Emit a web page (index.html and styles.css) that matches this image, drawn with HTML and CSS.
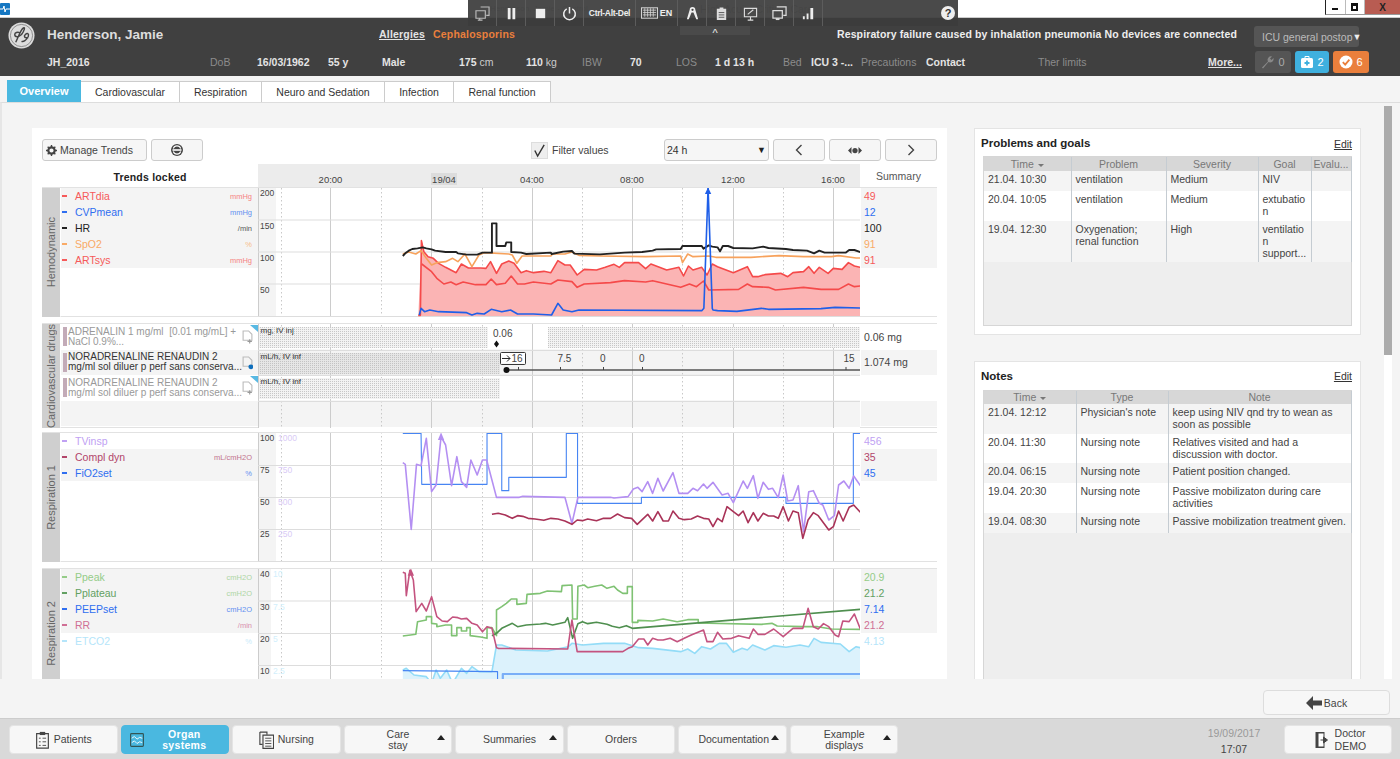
FILE: index.html
```html
<!DOCTYPE html>
<html lang="en">
<head>
<meta charset="utf-8">
<title>Henderson, Jamie</title>
<link rel="stylesheet" href="styles.css">
</head>
<body>
<div class="app">
  <div class="titlebar">
    <svg class="appicon" viewBox="0 0 10 12"><rect width="10" height="12" rx="1" fill="#1577c2"/><path d="M0 6h3l1-3 1 6 1-3h4" fill="none" stroke="#fff" stroke-width="1"/></svg>
    <span class="wintitle wt1">Henderson, Jamie - Control</span>
    <span class="wintitle wt2">High Acuity Critical Care</span>
    <div class="winctl">
      <span class="wc"><i class="wc-min"></i></span>
      <span class="wc"><i class="wc-res"></i></span>
      <span class="wc wc-close">X</span>
    </div>
  </div>

  <div class="remote">
    <span class="rt"><svg viewBox="0 0 16 16"><path d="M6 1h9v9h-3M1 5h10v8H1zM5 13v2M3 15h5" fill="none" stroke="#bbb" stroke-width="1.2"/></svg></span>
    <span class="rt"><svg viewBox="0 0 16 16"><path d="M4 2h3v12H4zM9 2h3v12H9z" fill="#eee"/></svg></span>
    <span class="rt"><svg viewBox="0 0 16 16"><rect x="3" y="3" width="10" height="10" fill="#eee"/></svg></span>
    <span class="rt"><svg viewBox="0 0 16 16"><path d="M5 3a6.2 6.2 0 1 0 6 0M8 1v7" fill="none" stroke="#eee" stroke-width="1.6"/></svg></span>
    <span class="rt rt-cad">Ctrl-Alt-Del</span>
    <span class="rt rt-kb"><svg viewBox="0 0 18 12"><rect x=".5" y=".5" width="17" height="11" fill="none" stroke="#ddd"/><path d="M2 3h14M2 5.500h14M2 8h14M4 1v9M7 1v9M10 1v9M13 1v9" stroke="#ddd" stroke-width=".8" fill="none"/></svg><b>EN</b></span>
    <span class="rt"><svg viewBox="0 0 16 16"><path d="M8 1a3 3 0 0 1 3 3l3 10h-2l-3-7H7l-3 7H2L5 4a3 3 0 0 1 3-3z" fill="#eee"/><circle cx="8" cy="4" r="1.200" fill="#444"/></svg></span>
    <span class="rt"><svg viewBox="0 0 16 16"><path d="M3 3h10v12H3zM6 1.500h4v3H6z" fill="#ddd"/><path d="M5 7h6M5 9.500h6M5 12h6" stroke="#555"/></svg></span>
    <span class="rt"><svg viewBox="0 0 16 16"><path d="M1.500 2.500h13v9h-13zM5 15h6M8 11.500V15M5 9l6-5" fill="none" stroke="#ddd" stroke-width="1.200"/></svg></span>
    <span class="rt"><svg viewBox="0 0 16 16"><path d="M5 1h10v9h-3" fill="none" stroke="#ddd" stroke-width="1.300"/><path d="M1 5h10v8H1z" fill="none" stroke="#ddd" stroke-width="1.300"/><path d="M4 13v2h4v-2" fill="#ddd"/></svg></span>
    <span class="rt"><svg viewBox="0 0 16 16"><path d="M2 11h2v3H2zM6 8h2v6H6zM10 2h3v12h-3z" fill="#eee"/></svg></span>
    <span class="rt rt-wide"></span>
    <span class="rt rt-help">?</span>
  </div>
  <div class="remote-tab">^</div>

  <header class="hdr">
    <div class="hdr-row1">
      <span class="pname up-t">Henderson, Jamie</span>
      <a class="hlink up-t">Allergies</a>
      <span class="allergy up-t">Cephalosporins</span>
      <span class="diag up-t">Respiratory failure caused by inhalation pneumonia No devices are connected</span>
      <span class="unitsel">ICU general postop<i>▼</i></span>
    </div>
    <div class="hdr-row2">
      <b>JH_2016</b><span>DoB</span><b>16/03/1962</b><b>55 y</b><b>Male</b>
      <b>175 <span>cm</span></b><b>110 <span>kg</span></b><span>IBW</span><b>70</b><span>LOS</span>
      <b>1 d 13 h</b><span>Bed</span><b>ICU 3 -...</b><span>Precautions</span><b>Contact</b>
      <span>Ther limits</span><a class="hlink">More...</a>
      <div class="badges">
        <div class="badge b-gray"><svg viewBox="0 0 14 14"><path d="M1 12.500 7 6.500a3.500 3.500 0 0 1 4-5L9 3.500l1.500 1.500 2-2a3.500 3.500 0 0 1-5 4l-5.500 6.500z" fill="#888"/></svg>0</div>
        <div class="badge b-blue"><svg viewBox="0 0 14 14"><rect x="1" y="3" width="12" height="10" rx="1.500" fill="#fff"/><path d="M5 3V1.500h4V3" fill="none" stroke="#fff"/><path d="M7 5.500v5M4.500 8h5" stroke="#3fb0de" stroke-width="1.800"/></svg>2</div>
        <div class="badge b-orange"><svg viewBox="0 0 14 14"><circle cx="7" cy="7" r="6.500" fill="#fff"/><path d="M3.800 7.200 6.200 9.600 10.400 4.600" fill="none" stroke="#ea7f3c" stroke-width="1.800"/></svg>6</div>
      </div>
    </div>
    <svg class="gelogo" viewBox="0 0 28 28"><circle cx="14" cy="14" r="13.500" fill="#ddd"/><circle cx="14" cy="14" r="11.500" fill="none" stroke="#555" stroke-width=".6"/><path d="M8 21c3-6 5-13 8-15 2-1 1 3-2 7-3 3-7 3-7 0 0-2 3-3 5-2M14 20c2 1 5-1 7-5 1-3-1-4-3-2-2 2-1 4 3 3" fill="none" stroke="#444" stroke-width="1.500"/></svg>
  </header>

  <nav class="tabs">
    <a class="tab tab-on t1">Overview</a>
    <a class="tab t2">Cardiovascular</a>
    <a class="tab t3">Respiration</a>
    <a class="tab t4">Neuro and Sedation</a>
    <a class="tab t5">Infection</a>
    <a class="tab t6">Renal function</a>
  </nav>

  <main class="content">
    <section class="chartcard">
      <div class="tools">
        <button class="btn btn-mt"><svg viewBox="0 0 12 12"><circle cx="6" cy="6" r="3.500" fill="none" stroke="#444" stroke-width="2.400"/><path d="M6 0v2.500M6 9.500V12M0 6h2.500M9.500 6H12M1.800 1.800l1.800 1.800M8.400 8.400l1.800 1.800M1.800 10.200l1.800-1.800M8.400 3.600l1.800-1.800" stroke="#444" stroke-width="1.500"/></svg>Manage Trends</button>
        <button class="btn btn-ref"><svg viewBox="0 0 12 12"><circle cx="6" cy="6" r="6" fill="#444"/><path d="M2.300 4.500a3.900 3.900 0 0 1 7.400 0M9.700 7.500a3.900 3.900 0 0 1-7.400 0" fill="none" stroke="#fff" stroke-width="1.100"/><path d="M1.500 5.500h9M1.500 6.500h9" stroke="#fff" stroke-width=".8"/></svg></button>
        <span class="check"><svg viewBox="0 0 16 16"><path d="M3 8l3 6 7-12" fill="none" stroke="#333" stroke-width="1.500"/></svg></span>
        <span class="filter">Filter values</span>
        <span class="sel">24 h<i>▼</i></span>
        <button class="btn btn-nav"><svg viewBox="0 0 8 12"><path d="M6.500 1 1.500 6l5 5" fill="none" stroke="#444" stroke-width="1.400"/></svg></button>
        <button class="btn btn-nav"><svg class="wide" viewBox="0 0 18 8"><path d="M5 0v8L1 4zM13 0v8l4-4z" fill="#444"/><circle cx="9" cy="4" r="3" fill="#444"/></svg></button>
        <button class="btn btn-nav"><svg viewBox="0 0 8 12"><path d="M1.500 1l5 5-5 5" fill="none" stroke="#444" stroke-width="1.400"/></svg></button>
      </div>

      <div class="row axisrow">
        <div class="locked">Trends locked</div>
        <svg class="axis" viewBox="258 164 602 23">
          <rect class="dateb" x="431" y="173" width="26" height="12"/>
          <text x="330.500" y="183">20:00</text><text x="444" y="183">19/04</text><text x="532" y="183">04:00</text><text x="632" y="183">08:00</text><text x="733" y="183">12:00</text><text x="833" y="183">16:00</text>
        </svg>
        <div class="sumhead">Summary</div>
      </div>

      <!-- Hemodynamic -->
      <div class="row sec">
        <div class="vlabel"><span>Hemodynamic</span></div>
        <div class="legend">
          <div class="lg on c-red"><i></i><span>ARTdia</span><em>mmHg</em></div>
          <div class="lg on c-blue"><i></i><span>CVPmean</span><em>mmHg</em></div>
          <div class="lg on c-blk"><i></i><span>HR</span><em>/min</em></div>
          <div class="lg on c-org"><i></i><span>SpO2</span><em>%</em></div>
          <div class="lg on c-red"><i></i><span>ARTsys</span><em>mmHg</em></div>
        </div>
        <svg class="plot" viewBox="258 188 602 129">
          <defs>
            <g id="vgrid">
              <path class="gmaj" d="M258.500 100V900M330.500 100V900M431.500 100V900M532.500 100V900M632.500 100V900M733.500 100V900M833.500 100V900"/>
              <path class="gmin" d="M281.500 100V900M381.500 100V900M482.500 100V900M582.500 100V900M682.500 100V900M783.500 100V900"/>
            </g>
          </defs>
          <rect class="ybg" x="258" y="187" width="18" height="130"/>
          <use href="#vgrid"/>
          <path class="ghz" d="M258 220H860M258 252H860M258 284H860M258 316.500H860"/>
          <text class="yt" x="260" y="196">200</text><text class="yt" x="260" y="228.500">150</text><text class="yt" x="260" y="260.500">100</text><text class="yt" x="260" y="292.500">50</text>
          <g transform="translate(400 130) scale(.35088 .33333)">
            <polygon class="f-red" points="62,332 68,365 80,380 95,385 110,400 130,412 160,428 175,402 195,414 230,414 245,415 258,395 275,430 290,402 310,393 325,400 345,428 360,422 380,428 410,424 430,428 450,392 470,405 485,405 505,435 525,418 560,420 585,412 610,403 625,412 640,398 680,398 700,416 715,402 760,420 795,412 808,438 822,408 835,420 860,412 875,435 890,402 905,410 950,428 990,410 1005,440 1020,440 1040,434 1085,430 1105,440 1120,428 1150,425 1165,410 1180,430 1195,412 1220,430 1235,415 1260,418 1278,398 1295,408 1312,412 1312,558 52,558"/>
            <polyline class="ln s-red" points="52,556 58,556 61,332 68,365 80,380 95,385 110,400 130,412 160,428 175,402 195,414 230,414 245,415 258,395 275,430 290,402 310,393 325,400 345,428 360,422 380,428 410,424 430,428 450,392 470,405 485,405 505,435 525,418 560,420 585,412 610,403 625,412 640,398 680,398 700,416 715,402 760,420 795,412 808,438 822,408 835,420 860,412 875,435 890,402 905,410 950,428 990,410 1005,440 1020,440 1040,434 1085,430 1105,440 1120,428 1150,425 1165,410 1180,430 1195,412 1220,430 1235,415 1260,418 1278,398 1295,408 1312,412"/>
            <polyline class="ln s-red" points="62,402 90,425 105,445 125,462 145,456 160,464 180,456 215,464 245,464 260,447 275,464 300,460 317,438 335,462 355,462 380,456 430,462 450,450 490,455 505,472 525,462 600,458 640,452 700,456 720,452 800,472 825,462 845,470 865,453 880,480 965,478 990,462 1005,470 1050,472 1070,480 1150,472 1200,478 1250,478 1278,462 1295,470 1312,468"/>
            <polyline class="ln s-org" points="8,372 25,366 45,372 60,362 75,385 90,405 105,398 130,395 150,385 165,395 185,372 205,410 225,375 240,368 310,372 320,375 333,400 348,378 430,378 435,372 470,372 490,366 510,376 570,378 700,380 800,378 805,398 820,372 835,380 880,378 900,382 1000,382 1080,377 1150,380 1230,380 1250,377 1300,384 1312,384"/>
            <polyline class="ln s-blk" points="8,378 15,370 25,362 35,357 50,355 65,352 75,355 90,358 100,362 130,366 160,366 165,370 190,374 220,374 235,368 262,368 262,280 275,280 275,348 300,348 303,337 317,337 317,366 345,368 360,372 430,368 432,372 465,365 490,363 497,371 570,373 640,368 690,366 720,362 730,358 800,357 805,348 860,348 865,356 880,346 890,350 905,352 912,364 920,348 935,348 950,354 1005,355 1035,350 1050,354 1100,357 1120,360 1160,362 1180,370 1195,362 1210,368 1270,368 1280,360 1295,360 1312,366"/>
            <polyline class="ln s-blue" points="55,555 60,535 70,545 85,540 110,545 190,548 205,555 220,550 240,552 260,538 290,545 315,540 335,552 380,552 432,555 450,520 465,540 490,545 510,540 860,542 866,535 878,175 890,535 892,540 905,542 960,544 1030,535 1050,538 1200,536 1240,532 1312,534"/>
            <polygon class="a-blue" points="869,192 878,172 887,192"/>
          </g>
        </svg>
        <div class="summary">
          <div class="sv on c-red">49</div><div class="sv on c-blue">12</div><div class="sv on c-blk">100</div><div class="sv on c-org">91</div><div class="sv on c-red">91</div>
        </div>
      </div>

      <!-- Cardiovascular drugs -->
      <div class="row sec sec-d">
        <div class="vlabel"><span>Cardiovascular drugs</span></div>
        <div class="legend">
          <div class="drug faded"><i class="pill"></i><p>ADRENALIN 1 mg/ml&nbsp; [0.01 mg/mL] +<br>NaCl 0.9%...</p>
            <svg class="doc" viewBox="0 0 10 12"><path d="M1 .5h5l3 3V9H1z" fill="none" stroke="#bbb"/><path d="M5 10h4M7 8v4" stroke="#999"/></svg><b class="corner"></b></div>
          <div class="drug on"><i class="pill"></i><p>NORADRENALINE RENAUDIN 2<br>mg/ml sol diluer p perf sans conserva...</p>
            <svg class="doc" viewBox="0 0 10 12"><path d="M1 .5h5l3 3V9H1z" fill="none" stroke="#bbb"/><circle cx="8" cy="9.500" r="2.200" fill="#0f6fbd"/></svg></div>
          <div class="drug faded"><i class="pill"></i><p>NORADRENALINE RENAUDIN 2<br>mg/ml sol diluer p perf sans conserva...</p>
            <svg class="doc" viewBox="0 0 10 12"><path d="M1 .5h5l3 3V9H1z" fill="none" stroke="#bbb"/><path d="M5 10h4M7 8v4" stroke="#999"/></svg><b class="corner"></b></div>
          <div class="drug on"></div>
        </div>
        <svg class="plot" viewBox="258 324 602 102">
          <defs>
            <pattern id="hatch" width="2" height="2" patternUnits="userSpaceOnUse"><rect width="2" height="2" fill="#f3f3f3"/><rect width="1" height="1" fill="#c6c6c6"/></pattern>
            <pattern id="hatch2" width="2" height="2" patternUnits="userSpaceOnUse"><rect width="2" height="2" fill="#e6e6e6"/><rect width="1" height="1" fill="#c2c2c2"/></pattern>
          </defs>
          <rect class="rowbg" x="258" y="350" width="602" height="25"/><rect class="rowbg" x="258" y="401" width="602" height="25"/>
          <use href="#vgrid"/>
          <rect fill="url(#hatch)" x="259" y="326" width="229" height="21"/><rect fill="url(#hatch)" x="548" y="326" width="312" height="21"/>
          <rect fill="url(#hatch2)" x="259" y="352" width="241" height="21"/>
          <rect fill="url(#hatch)" x="259" y="377" width="241" height="21"/>
          <path class="ghz" d="M258 349.500H860M258 374.500H860M258 400.500H860"/>
          <text class="dt" x="260.500" y="332.500">mg, IV inj</text><text class="dt" x="260.500" y="358">mL/h, IV inf</text><text class="dt" x="260.500" y="383.500">mL/h, IV inf</text>
          <text class="dv" x="493" y="336">0.06</text>
          <path class="dia" d="M496.500 339.500l2.500 3.500-2.500 3.500-2.500-3.500z"/>
          <rect class="boxv" x="500.500" y="351.500" width="25" height="12" rx="1"/>
          <path class="arr" d="M502 357.500h8M507 354.500l3 3-3 3"/>
          <text class="dv" x="511.500" y="361.500">16</text>
          <text class="dv" x="557.500" y="361.500">7.5</text><text class="dv" x="600" y="361.500">0</text><text class="dv" x="639" y="361.500">0</text><text class="dv" x="843.500" y="361.500">15</text>
          <path class="tl" d="M506 369H860"/><path class="tk" d="M518.500 366v3M560.500 366v3M603.500 366v3M642.500 366v3M846 366v3"/>
          <circle class="dia" cx="506.500" cy="369" r="3"/>
        </svg>
        <div class="summary">
          <div class="sd"><span>0.06 mg</span></div><div class="sd sd-on"><span>1.074 mg</span></div><div class="sd"></div><div class="sd sd-on"></div>
        </div>
      </div>

      <!-- Respiration 1 -->
      <div class="row sec">
        <div class="vlabel"><span>Respiration 1</span></div>
        <div class="legend">
          <div class="lg c-pur"><i></i><span>TVinsp</span><em></em></div>
          <div class="lg on c-mar"><i></i><span>Compl dyn</span><em>mL/cmH2O</em></div>
          <div class="lg on c-blue"><i></i><span>FiO2set</span><em>%</em></div>
        </div>
        <svg class="plot" viewBox="258 433 602 129">
          <rect class="ybg" x="258" y="432" width="18" height="130"/>
          <use href="#vgrid"/>
          <path class="ghz" d="M258 465.500H860M258 497.500H860M258 529.500H860M258 561.500H860"/>
          <text class="yt" x="260" y="441">100</text><text class="yt" x="260" y="473">75</text><text class="yt" x="260" y="505">50</text><text class="yt" x="260" y="537">25</text>
          <text class="yl-p" x="278" y="441">1000</text><text class="yl-p" x="278" y="473">750</text><text class="yl-p" x="278" y="505">500</text><text class="yl-p" x="278" y="537">250</text>
          <g transform="translate(400 425) scale(.35088 .33333)">
            <polyline class="ln1 s-blue2" points="8,25 60,25 62,178 248,178 248,25 290,25 290,197 310,197 310,157 474,157 474,25 506,25 506,235 688,235 688,217 1100,217 1100,235 1292,235 1292,25 1312,25"/>
            <polyline class="ln s-pur" points="8,113 15,118 32,313 47,118 60,122 75,40 90,200 103,180 117,35 130,60 147,182 162,95 175,170 190,187 202,105 220,150 235,105 247,105 275,217 340,217 350,214 470,217 490,295 507,217 600,217 610,219 650,215 665,192 678,187 690,200 706,170 720,205 735,160 750,198 778,143 795,205 820,205 835,190 848,197 865,177 875,190 892,172 918,210 935,205 950,233 978,168 990,190 1007,152 1020,220 1035,172 1050,193 1062,190 1078,218 1092,150 1105,228 1120,225 1135,182 1150,320 1165,200 1178,197 1195,235 1205,240 1222,285 1238,272 1250,180 1265,168 1280,190 1293,153 1312,182"/>
            <polygon class="a-pur" points="108,45 117,22 126,45"/>
            <polyline class="ln s-mar" points="262,268 280,265 300,270 320,280 335,272 350,274 365,280 385,282 410,286 430,280 450,282 470,288 490,298 505,285 520,287 535,282 560,287 580,280 600,280 620,267 640,278 660,280 676,298 706,268 720,288 735,260 750,288 765,288 778,258 795,280 810,284 830,282 848,273 865,280 880,282 892,305 905,280 918,290 932,245 950,260 965,272 978,258 992,293 1007,263 1020,288 1035,265 1050,273 1065,273 1078,280 1092,245 1107,288 1120,258 1135,263 1148,340 1163,285 1178,263 1192,272 1222,315 1235,305 1250,258 1263,288 1280,247 1293,240 1312,262"/>
          </g>
        </svg>
        <div class="summary">
          <div class="sv c-pur">456</div><div class="sv on c-mar">35</div><div class="sv on c-blue">45</div>
        </div>
      </div>

      <!-- Respiration 2 -->
      <div class="row sec">
        <div class="vlabel"><span>Respiration 2</span></div>
        <div class="legend">
          <div class="lg on c-lg"><i></i><span>Ppeak</span><em>cmH2O</em></div>
          <div class="lg on c-dg"><i></i><span>Pplateau</span><em class="u-lg">cmH2O</em></div>
          <div class="lg on c-blue"><i></i><span>PEEPset</span><em>cmH2O</em></div>
          <div class="lg on c-pink"><i></i><span>RR</span><em>/min</em></div>
          <div class="lg c-sky"><i></i><span>ETCO2</span><em>%</em></div>
        </div>
        <svg class="plot" viewBox="258 569 602 129">
          <rect class="ybg" x="258" y="568" width="13" height="130"/>
          <use href="#vgrid"/>
          <path class="ghz" d="M258 601H860M258 633.500H860M258 665.500H860"/>
          <text class="yt" x="260" y="577">40</text><text class="yt" x="260" y="609.500">30</text><text class="yt" x="260" y="642">20</text><text class="yt" x="260" y="673.500">10</text>
          <text class="yl-s" x="273" y="577">10</text><text class="yl-s" x="273" y="609.500">7.5</text><text class="yl-s" x="273" y="642">5</text><text class="yl-s" x="273" y="673.500">2.5</text>
          <g transform="translate(400 425) scale(.35088 .33333)">
            <polygon class="f-sky" points="8,735 18,730 40,750 75,755 90,775 103,735 115,760 133,735 150,775 175,730 190,745 205,725 225,740 262,740 275,660 290,660 330,675 420,678 480,665 490,655 520,660 580,655 640,655 680,668 720,670 800,680 820,672 840,685 860,665 885,672 910,655 930,655 950,682 975,670 990,675 1005,660 1040,675 1065,662 1100,667 1140,660 1165,665 1180,640 1200,652 1255,657 1280,680 1300,665 1312,668 1312,800 8,800"/>
            <polyline class="ln s-sky" points="8,735 18,730 40,750 75,755 90,775 103,735 115,760 133,735 150,775 175,730 190,745 205,725 225,740 262,740 275,660 290,660 330,675 420,678 480,665 490,655 520,660 580,655 640,655 680,668 720,670 800,680 820,672 840,685 860,665 885,672 910,655 930,655 950,682 975,670 990,675 1005,660 1040,675 1065,662 1100,667 1140,660 1165,665 1180,640 1200,652 1255,657 1280,680 1300,665 1312,668"/>
            <polyline class="ln1 s-blue2" points="8,737 278,740 278,770"/>
            <polyline class="ln s-peep" points="293,770 293,747 1312,747"/>
            <polyline class="ln s-lg" points="8,633 30,630 45,628 50,590 75,585 75,575 90,575 90,595 105,597 105,605 130,600 147,600 147,632 162,632 162,608 175,608 175,618 190,618 190,608 200,608 200,632 230,636 248,640 248,608 262,608 275,632 275,555 290,545 303,535 317,522 333,522 333,538 360,535 362,508 400,505 420,498 460,500 462,482 490,480 492,582 505,582 507,484 525,480 535,488 555,484 575,480 590,490 610,484 620,495 635,505 648,505 648,485 662,485 662,592 678,592 678,586 720,588 750,582 790,590 820,584 850,584 850,594 1030,598 1060,595 1075,603 1150,605 1190,605 1230,612 1312,613"/>
            <polyline class="ln s-dg" points="262,632 275,625 290,610 320,595 335,605 360,600 400,597 415,595 435,600 470,592 478,578 492,640 507,596 520,590 535,596 560,592 590,598 605,604 625,608 645,602 662,610 1312,553"/>
            <polyline class="ln s-pink" points="8,442 15,445 18,512 28,436 38,465 46,560 62,535 75,558 90,515 105,575 120,588 135,590 150,576 165,578 175,582 190,580 205,595 220,600 235,620 248,605 262,610 275,668 280,670 478,672 490,585 505,680 635,680 650,670 662,665 680,642 695,642 706,660 720,640 735,645 750,645 770,640 790,650 810,640 830,630 865,615 875,650 892,650 905,622 920,642 945,640 965,632 995,640 1007,612 1020,628 1040,628 1065,612 1092,635 1120,610 1148,610 1163,550 1178,605 1192,612 1207,596 1222,605 1240,630 1250,635 1262,588 1280,590 1295,567 1312,612"/>
            <polygon class="a-pink" points="22,452 31,430 40,452"/>
          </g>
        </svg>
        <div class="summary">
          <div class="sv on c-lg">20.9</div><div class="sv on c-dg">21.2</div><div class="sv on c-blue">7.14</div><div class="sv on c-pink">21.2</div><div class="sv c-sky">4.13</div>
        </div>
      </div>
    </section>

    <aside class="side">
      <section class="panel p1">
        <div class="phead"><h2>Problems and goals</h2><a>Edit</a></div>
        <div class="twrap tw1">
          <table>
            <colgroup><col class="c87"><col class="c95"><col class="c92"><col class="c53"><col class="c40"></colgroup>
            <thead><tr><th>Time <i class="sort"></i></th><th>Problem</th><th>Severity</th><th>Goal</th><th class="left">Evalu...</th></tr></thead>
            <tbody>
              <tr><td>21.04. 10:30</td><td>ventilation</td><td>Medium</td><td>NIV</td><td></td></tr>
              <tr class="w"><td>20.04. 10:05</td><td>ventilation</td><td>Medium</td><td>extubatio<br>n</td><td></td></tr>
              <tr><td>19.04. 12:30</td><td>Oxygenation;<br>renal function</td><td>High</td><td>ventilatio<br>n<br>support...</td><td></td></tr>
            </tbody>
          </table>
        </div>
      </section>
      <section class="panel p2">
        <div class="phead"><h2>Notes</h2><a>Edit</a></div>
        <div class="twrap tw2">
          <table>
            <colgroup><col class="c92"><col class="c92"><col class="c183"></colgroup>
            <thead><tr><th>Time <i class="sort"></i></th><th>Type</th><th>Note</th></tr></thead>
            <tbody>
              <tr><td>21.04. 12:12</td><td>Physician's note</td><td>keep using NIV qnd try to wean as<br>soon as possible</td></tr>
              <tr class="w"><td>20.04. 11:30</td><td>Nursing note</td><td>Relatives visited and had a<br>discussion with doctor.</td></tr>
              <tr><td>20.04. 06:15</td><td>Nursing note</td><td>Patient position changed.</td></tr>
              <tr class="w"><td>19.04. 20:30</td><td>Nursing note</td><td>Passive mobilizaton during care<br>activities</td></tr>
              <tr><td>19.04. 08:30</td><td>Nursing note</td><td>Passive mobilization treatment given.</td></tr>
            </tbody>
          </table>
        </div>
      </section>
    </aside>

    <div class="scroll"><div class="thumb"></div></div>
  </main>

  <div class="backrow">
    <button class="backbtn"><svg viewBox="0 0 16 14"><path d="M7 0 0 7l7 7V9.500h9v-5H7z" fill="#444"/></svg>Back</button>
  </div>

  <footer class="foot">
    <button class="fb"><svg class="fi" viewBox="0 0 16 20"><path d="M1.500 3h13v16h-13z" fill="none" stroke="#444" stroke-width="1.300"/><path d="M5 1h6v3.500H5z" fill="#444"/><path d="M4 8h2M8 8h4M4 12h2M8 12h4M4 16h2M8 16h4" stroke="#444"/></svg>Patients</button>
    <button class="fb fb-on"><svg class="fi fi-a" viewBox="0 0 16 16"><rect x=".7" y=".7" width="14.600" height="14.600" rx="1" fill="none" stroke="#355" stroke-width="1.300"/><path d="M2 6l3-2 3 3 3-2 3 1M2 11l3-2 3 3 3-2 3 1" fill="none" stroke="#fff"/></svg><span class="two">Organ<br>systems</span></button>
    <button class="fb"><svg class="fi" viewBox="0 0 17 20"><path d="M1 1h8v3M1 1v14h3" fill="none" stroke="#444" stroke-width="1.300"/><path d="M4.500 4.500h12v15h-12z" fill="none" stroke="#444" stroke-width="1.300"/><path d="M7 8h7M7 11h7M7 14h7M7 17h7" stroke="#444"/></svg>Nursing</button>
    <button class="fb"><span class="twol">Care<br>stay</span><i class="up"></i></button>
    <button class="fb"><span>Summaries</span><i class="up"></i></button>
    <button class="fb">Orders</button>
    <button class="fb fb-doc"><span>Documentation</span><i class="up"></i></button>
    <button class="fb"><span class="twol">Example<br>displays</span><i class="up"></i></button>
    <div class="clock"><span>19/09/2017</span><b>17:07</b></div>
    <button class="fb fb-user"><svg class="fi" viewBox="0 0 14 18"><path d="M1 1h9v16H1z" fill="#444"/><path d="M4 2.500h5v13H4z" fill="#fff"/><path d="M6 9h4M9 6l4 3-4 3z" fill="#444" stroke="#444"/></svg><span class="twol">Doctor<br>DEMO</span></button>
  </footer>
</div>
</body>
</html>
```

FILE: styles.css
```css
* { box-sizing: border-box; }
html, body { margin: 0; height: 100%; overflow: hidden; }
body { font-family: "Liberation Sans", Arial, sans-serif; font-size: 10.5px; color: #444; background: #f4f4f4; }
button { font: inherit; color: inherit; }
.app { position: relative; width: 1400px; height: 759px; display: flex; flex-direction: column; overflow: hidden; }

/* window title bar */
.titlebar { height: 18px; background: #fff; border-bottom: 1px solid #ccc; display: flex; flex: none; align-items: flex-start; }
.appicon { width: 10px; height: 12px; margin-top: 3px; }
.wintitle { margin-top: 4px; font-size: 8px; color: #bbb; white-space: nowrap; }
.wt1 { margin-left: 480px; width: 100px; }
.wt2 { margin-left: 110px; font-size: 10.500px; margin-top: 3px; }
.winctl { margin-left: auto; display: flex; height: 15px; border-left: 1px solid #222; border-bottom: 1px solid #999; }
.wc { width: 19.500px; height: 14px; display: flex; align-items: center; justify-content: center; background: #fff; border-right: 1px solid #bbb; }
.wc-min { width: 6px; height: 2px; background: #111; margin-top: 3px; }
.wc-res { width: 7px; height: 8px; border: 2px solid #111; border-top-width: 3px; }
.wc-close { width: 35px; background: #b85c52; color: #222; font-weight: bold; font-size: 10px; border: 0; }

/* remote session toolbar */
.remote { position: absolute; left: 468px; top: 0; width: 490px; height: 26px; background: rgba(60,60,60,.93); display: flex; align-items: center; z-index: 5; }
.rt { flex: none; width: 29px; height: 26px; display: flex; align-items: center; justify-content: center; border-right: 1px solid #5c5c5c; color: #eee; }
.rt svg { width: 15px; height: 15px; }
.rt-cad { width: 52px; font-size: 8.500px; font-weight: bold; letter-spacing: -.3px; white-space: nowrap; }
.rt-kb { width: 42px; gap: 2px; }
.rt-kb svg { width: 17px; height: 12px; }
.rt-kb b { font-size: 9px; }
.rt-wide { width: 118px; border-right: 0; }
.rt-help { width: 14px; height: 14px; border: 0; border-radius: 50%; background: #eee; color: #333; font-weight: bold; font-size: 11px; }
.remote-tab { position: absolute; left: 680px; top: 26px; width: 70px; height: 9px; background: #4a4a4a; color: #eee; text-align: center; font-size: 11px; line-height: 14px; z-index: 5; }

/* patient header */
.hdr { position: relative; height: 58px; flex: none; background: #404040; padding-top: 8px; color: #e4e4e4; }
.gelogo { position: absolute; left: 8px; top: 4px; width: 27px; height: 27px; }
.hdr-row1 { height: 21px; display: grid; grid-template-columns: 379px 54px 404px 417px auto; align-items: center; font-weight: bold; font-size: 10.500px; letter-spacing: .2px; }
.up-t { padding-bottom: 5px; }
.pname { padding-left: 47px; font-size: 13.500px; letter-spacing: 0; color: #ddd; }
.hlink { text-decoration: underline; color: #e4e4e4; }
.allergy { color: #ea7f3c; }
.diag { color: #eee; white-space: nowrap; letter-spacing: .12px; }
.unitsel { width: 105px; height: 21px; background: #555; border-radius: 3px; color: #bbb; font-weight: normal; letter-spacing: 0; display: flex; align-items: center; justify-content: space-between; padding: 0 1px 0 8px; font-size: 10.500px; white-space: nowrap; }
.unitsel i { font-style: normal; font-size: 9px; color: #eee; }
.hdr-row2 { height: 22px; margin-top: 4px; padding-left: 47px; display: grid; grid-template-columns: 163px 47px 71px 54px 77px 67px 56px 48px 46px 39px 68px 28px 50px 65px 112px 170px 47px auto; align-items: center; font-size: 10.500px; }
.hdr-row2 b { white-space: nowrap; }
.hdr-row2 > span, .hdr-row2 b span { color: #8c8c8c; font-weight: normal; white-space: nowrap; }
.hdr-row2 b span { color: #ccc; }
.hdr-row2 .hlink { font-weight: bold; }
.badges { display: flex; gap: 4px; }
.badge { width: 36px; height: 22px; border-radius: 3px; display: flex; align-items: center; justify-content: center; gap: 3px; font-size: 11px; color: #fff; }
.badge svg { width: 14px; height: 14px; }
.b-gray { background: #555; color: #aaa; }
.b-blue { background: #3fb0de; width: 34px; }
.b-orange { background: #ea7f3c; }

/* tabs */
.tabs { height: 26px; flex: none; display: flex; align-items: flex-end; padding-left: 7px; background: #f4f4f4; }
.tab { height: 21px; display: flex; align-items: center; justify-content: center; background: #fff; border: 1px solid #ccc; border-left: 0; border-bottom: 0; font-size: 10.500px; color: #333; }
.tab-on { height: 22px; background: #4ab8e0; color: #fff; font-weight: bold; border: 0; font-size: 11px; }
.t1 { width: 74px; } .t2 { width: 99px; } .t3 { width: 82px; } .t4 { width: 123px; } .t5 { width: 69px; } .t6 { width: 97px; }

/* main area */
.content { height: 577px; flex: none; display: flex; align-items: flex-start; overflow: hidden; border-top: 1px solid #ddd; background: #f4f4f4; border-left: 2px solid #e6e6e6; }
.chartcard { flex: none; width: 915px; margin: 25px 0 0 30px; padding: 11px 10px 0; background: #fff; }
.tools { display: flex; align-items: center; height: 22px; }
.btn { height: 22px; padding: 0; background: #f6f6f6; border: 1px solid #ccc; border-radius: 3px; display: flex; align-items: center; justify-content: center; font-size: 10.500px; color: #444; }
.btn svg { width: 8px; height: 12px; }
.btn svg.wide { width: 16px; height: 7px; }
.btn-mt { width: 105px; gap: 3px; justify-content: flex-start; padding-left: 3px; }
.btn-mt svg { width: 11px; height: 11px; }
.btn-ref { width: 52px; margin-left: 4px; }
.btn-ref svg { width: 12px; height: 12px; }
.check { width: 17px; height: 17px; margin-left: 328px; background: #eee; border: 1px solid #ddd; }
.check svg { display: block; width: 15px; height: 15px; }
.filter { margin-left: 4px; width: 112px; }
.sel { width: 105px; height: 22px; background: #f6f6f6; border: 1px solid #ccc; border-radius: 3px; display: flex; align-items: center; justify-content: space-between; padding: 0 2px 0 2px; color: #333; }
.sel i { font-style: normal; font-size: 9px; color: #222; }
.btn-nav { width: 52px; margin-left: 4px; }

.row { display: grid; grid-template-columns: 18px 198px 602px 77px; }
.axisrow { margin-top: 3px; height: 23px; }
.locked { grid-column: 1 / 3; padding-top: 7px; text-align: center; font-weight: bold; font-size: 10.500px; color: #222; letter-spacing: .2px; }
.axis { display: block; width: 602px; height: 23px; background: #ececec; }
.axis text { font-size: 9.500px; fill: #444; text-anchor: middle; }
.dateb { fill: #dcdcdc; }
.sumhead { text-align: center; padding-top: 6px; color: #555; font-size: 10.500px; }

.sec { height: 130px; margin-bottom: 6px; border-top: 1px solid #e2e2e2; }
.sec-d { height: 103px; }
.vlabel { background: #cfcfcf; display: flex; align-items: center; justify-content: center; }
.vlabel span { writing-mode: vertical-rl; transform: rotate(180deg); white-space: nowrap; font-size: 11px; color: #666; }
.legend { border-left: 1px solid #fff; border-bottom: 1px solid #e2e2e2; }
.summary { border-bottom: 1px solid #e2e2e2; padding-left: 1px; }
.lg { height: 16px; display: flex; align-items: center; padding-right: 6px; font-size: 10.500px; }
.lg i { width: 5px; height: 1.500px; margin-left: 1px; background: currentColor; flex: none; }
.lg span { margin-left: 8px; flex: 1; }
.lg em { font-style: normal; font-size: 7.500px; opacity: .75; }
.on { background: #f4f4f4; }
.sv { height: 16px; padding-left: 3px; line-height: 17px; font-size: 10.500px; }
.c-red { color: #f65a5a; }
.c-blue { color: #2f6ef0; }
.c-blk { color: #222; }
.c-org { color: #f9aa66; }
.c-pur { color: #c0a1f3; }
.c-mar { color: #b2456a; }
.c-lg { color: #95cc88; }
.c-dg { color: #62a062; }
.c-pink { color: #d06f95; }
.c-sky { color: #b5e5fa; }
.u-lg { color: #95cc88; }

.plot { display: block; width: 602px; height: 100%; background: #fff; }
.ybg { fill: #f4f4f4; }
.rowbg { fill: #f4f4f4; }
.gmaj { stroke: #ccc; stroke-width: 1; fill: none; }
.gmin { stroke: #c8c8c8; stroke-width: 1; stroke-dasharray: 1.500 2.500; fill: none; }
.ghz { stroke: #ddd; stroke-width: 1.200; fill: none; }
.yt { font-size: 8.500px; fill: #444; }
.yl-p { font-size: 8.500px; fill: #d9cbf6; }
.yl-s { font-size: 8.500px; fill: #d2effc; }
.dt { font-size: 8px; fill: #333; }
.dv { font-size: 10px; fill: #444; }
.dia { fill: #111; }
.boxv { fill: #fff; stroke: #333; stroke-width: 1; }
.arr { stroke: #222; fill: none; stroke-width: 1; }
.tl { stroke: #555; stroke-width: 1.500; fill: none; }
.tk { stroke: #444; stroke-width: 1; fill: none; }

.ln, .ln1 { fill: none; stroke-linejoin: round; vector-effect: non-scaling-stroke; }
.ln { stroke-width: 1.600px; }
.ln1 { stroke-width: 1.100px; }
.f-red { fill: #fbb4b4; }
.f-sky { fill: #dcf2fc; }
.s-red { stroke: #f54a4a; }
.s-org { stroke: #f7a25c; }
.s-blk { stroke: #222; stroke-width: 1.900px; }
.s-blue { stroke: #1f5fe8; }
.s-blue2 { stroke: #4785f3; }
.s-pur { stroke: #b48ff2; }
.s-mar { stroke: #a93358; }
.s-lg { stroke: #7fc273; }
.s-dg { stroke: #4f8f4f; }
.s-pink { stroke: #c4537f; }
.s-sky { stroke: #93dcf7; }
.s-peep { stroke: #79aef7; stroke-width: 2.200px; }
.a-blue { fill: #1f5fe8; }
.a-pur { fill: #b48ff2; }
.a-pink { fill: #c4537f; }

/* drug rows */
.drug { position: relative; height: 25.500px; padding-left: 7px; display: flex; align-items: center; font-size: 10px; color: #333; }
.drug p { margin: 0; line-height: 10px; white-space: nowrap; }
.drug.faded { color: #999; }
.pill { position: absolute; left: 2px; top: 3px; width: 4px; height: 19px; background: #c3abb8; }
.doc { position: absolute; right: 5px; top: 6px; width: 11px; height: 14px; }
.corner { position: absolute; right: 0; top: 1px; width: 0; height: 0; border-top: 7px solid #58b9e3; border-left: 8px solid transparent; }
.sd { height: 25.500px; display: flex; align-items: center; padding-left: 3px; color: #444; font-size: 10.500px; }
.sd-on { background: #f4f4f4; }

/* side panels */
.side { flex: none; width: 387px; margin: 25px 0 0 27px; display: flex; flex-direction: column; gap: 26px; }
.panel { background: #fff; border: 1px solid #e4e4e4; padding: 0 8px; }
.p1 { height: 207px; }
.p2 { height: 340px; }
.phead { height: 27px; display: flex; align-items: center; justify-content: space-between; padding-top: 2px; }
.p2 .phead { height: 26px; padding-top: 1px; }
.phead h2 { margin: -2px 0 0 -2px; font-size: 11.500px; color: #222; }
.p2 .phead h2 { margin-top: 0; }
.phead a { text-decoration: underline; font-size: 10.500px; color: #333; }
.twrap { background: #eee; border: 1px solid #d6d6d6; width: 369px; }
.tw1 { height: 170px; }
.tw2 { height: 300px; margin-top: 2px; }
table { width: 367px; border-collapse: collapse; table-layout: fixed; font-size: 10.500px; line-height: 12.300px; }
th { height: 14px; padding: 0; background: #d7d7d7; color: #777; font-weight: normal; border-right: 1px solid #c5ccd2; overflow: hidden; white-space: nowrap; }
th.left { text-align: left; padding-left: 2px; }
.tw2 th { height: 13px; }
td { height: 20px; padding: 2px 4px 3px 4px; vertical-align: top; background: #f4f4f4; border-right: 1px solid #c5ccd2; color: #444; white-space: nowrap; overflow: hidden; }
tr.w td { background: #fff; }
.sort { display: inline-block; border-top: 3px solid #777; border-left: 3px solid transparent; border-right: 3px solid transparent; vertical-align: middle; margin-left: 1px; }
.c87 { width: 87px; } .c95 { width: 95px; } .c92 { width: 92px; } .c53 { width: 53px; } .c40 { width: 40px; } .c183 { width: 183px; }

.scroll { flex: none; width: 8px; height: 573px; margin: 3px 0 0 23px; background: #fff; }
.thumb { height: 249px; background: #ababab; }

/* back row */
.backrow { height: 40px; flex: none; display: flex; justify-content: flex-end; padding: 11px 10px 0 0; background: #f4f4f4; border-bottom: 1px solid #ccc; }
.backbtn { width: 127px; height: 25px; background: #f7f7f7; border: 1px solid #ddd; border-radius: 4px; display: flex; align-items: center; justify-content: center; gap: 2px; font-size: 10.500px; color: #444; padding: 0; }
.backbtn svg { width: 16px; height: 14px; }

/* footer */
.foot { flex: 1; background: #d9d9d9; display: flex; align-items: flex-start; gap: 3.070px; padding: 6px 0 0 9px; }
.fb { position: relative; flex: none; width: 108.500px; height: 29px; padding: 0; background: #f7f7f7; border: 1px solid #e4e4e4; border-radius: 4px; display: flex; align-items: center; justify-content: center; gap: 4px; font-size: 10.500px; color: #444; line-height: 11px; }
.fi { width: 15px; height: 18px; flex: none; }
.fb-on { background: #4ab8e0; border-color: #4ab8e0; color: #fff; font-weight: bold; justify-content: flex-start; padding-left: 8px; letter-spacing: .3px; }
.fi-a { width: 14px; height: 14px; }
.two { flex: 1; text-align: center; margin-right: 7px; }
.twol { text-align: center; }
.up { position: absolute; right: 6px; top: 9px; border-bottom: 5px solid #222; border-left: 4px solid transparent; border-right: 4px solid transparent; }
.fb-doc { justify-content: flex-start; padding-left: 19px; }
.fb-doc .up { right: 7px; }
.clock { flex: none; width: 65px; margin-left: 300px; text-align: center; display: flex; flex-direction: column; gap: 4px; font-size: 10.500px; padding-top: 2px; }
.clock span { color: #999; }
.clock b { font-weight: normal; color: #444; }
.fb-user { margin-left: 14px; justify-content: flex-start; padding-left: 29px; gap: 6px; }
.fb-user .twol { text-align: left; line-height: 13px; }
```
